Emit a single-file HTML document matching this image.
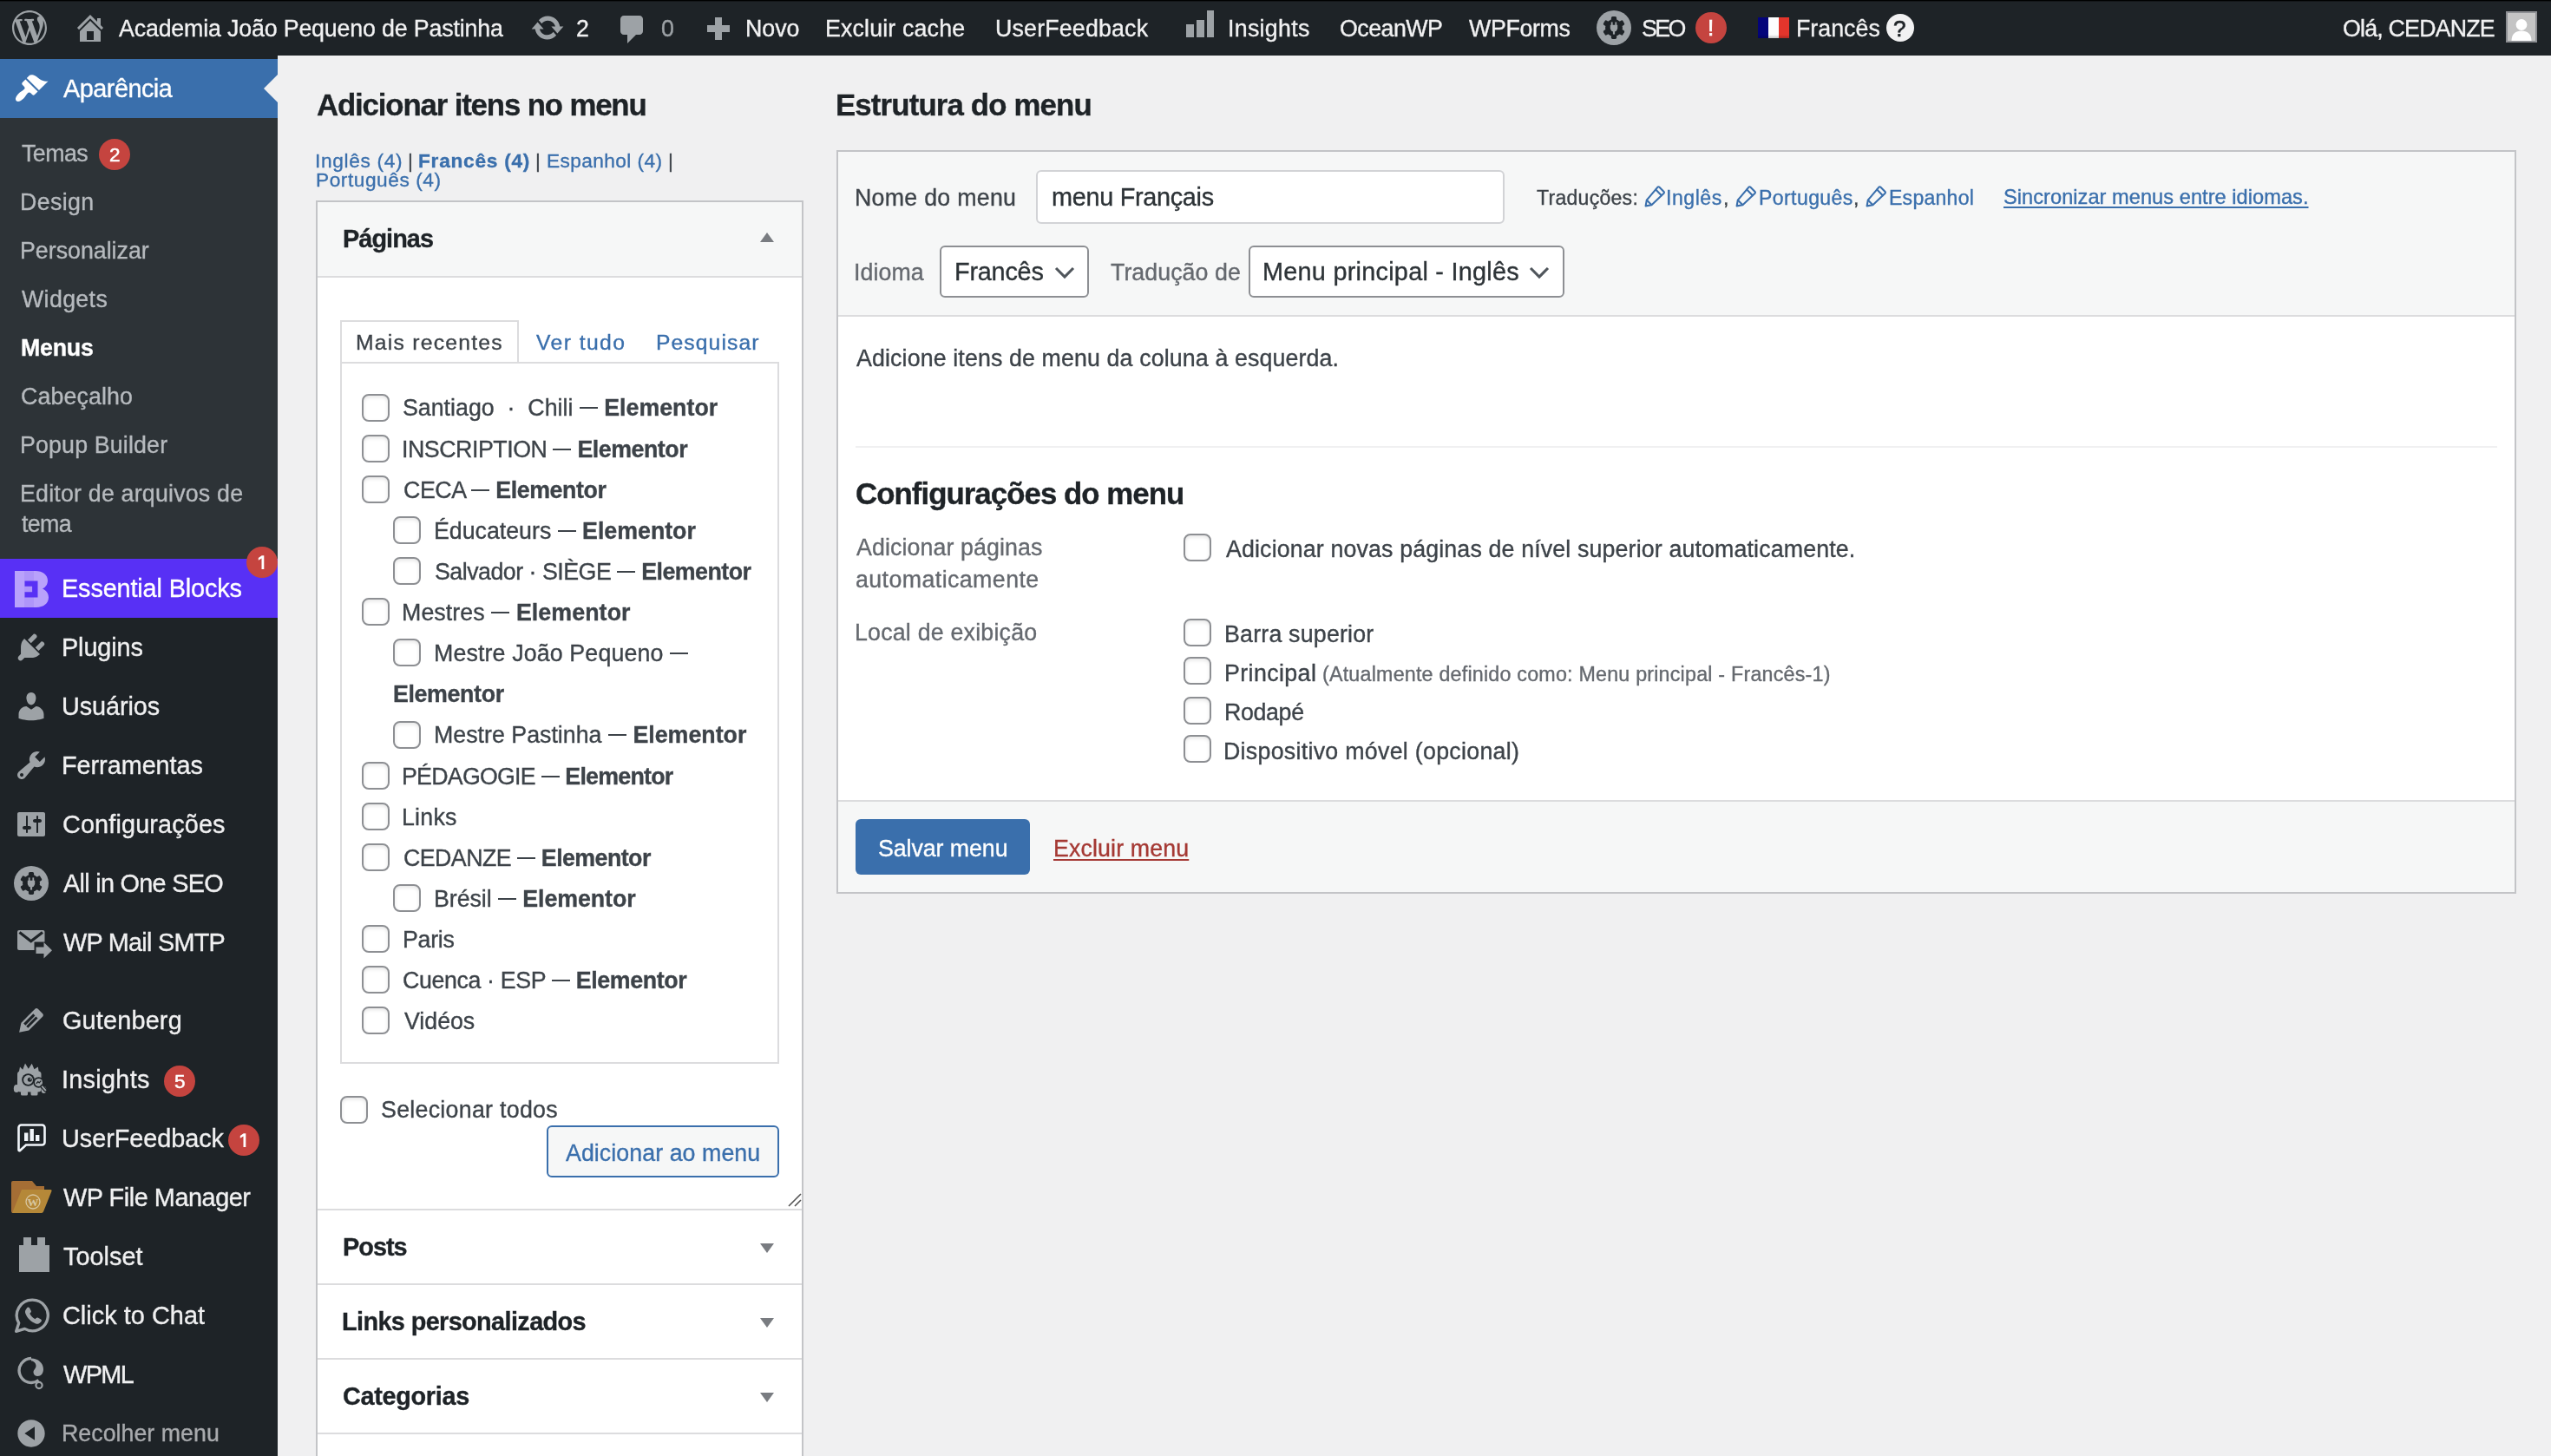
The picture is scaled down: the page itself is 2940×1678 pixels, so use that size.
<!DOCTYPE html>
<html lang="pt-BR"><head><meta charset="utf-8"><title>Menus</title><style>
html,body{margin:0;padding:0}
body{width:2940px;height:1678px;overflow:hidden;position:relative;background:#f0f0f1;font-family:"Liberation Sans",sans-serif;}
.t{position:absolute;white-space:nowrap;line-height:1;font-family:"Liberation Sans",sans-serif;-webkit-text-stroke:.35px currentColor;will-change:transform;}
.t b{font-weight:700}
.d{display:inline-block;width:21px;height:2px;background:currentColor;vertical-align:7.6px}
</style></head><body>
<div style="position:absolute;left:0px;top:0px;width:2940px;height:64px;background:#1e2327"></div>
<div style="position:absolute;left:0px;top:0px;width:2940px;height:1px;background:#000"></div>
<div style="position:absolute;left:0px;top:1px;width:2940px;height:1px;background:rgba(0,0,0,.35)"></div>
<svg style="position:absolute;left:14px;top:12px;" width="40" height="40" viewBox="0 0 20 20"><path fill="#9da2a6" d="M20 10c0-5.51-4.49-10-10-10C4.48 0 0 4.49 0 10c0 5.52 4.48 10 10 10 5.51 0 10-4.48 10-10zM7.78 15.37L4.37 6.22c.55-.02 1.17-.08 1.17-.08.5-.06.44-1.13-.06-1.11 0 0-1.45.11-2.37.11-.18 0-.37 0-.58-.01C4.12 2.69 6.87 1.11 10 1.11c2.33 0 4.45.87 6.05 2.34-.68-.11-1.65.39-1.65 1.58 0 .74.45 1.36.9 2.1.35.61.55 1.36.55 2.46 0 1.49-1.4 5-1.4 5l-3.03-8.37c.54-.02.82-.17.82-.17.5-.05.44-1.25-.06-1.22 0 0-1.44.12-2.38.12-.87 0-2.33-.12-2.33-.12-.5-.03-.56 1.2-.06 1.22l.92.08 1.26 3.41zM17.41 10c.24-.64.74-1.87.43-4.25.7 1.29 1.05 2.71 1.05 4.25 0 3.29-1.73 6.24-4.4 7.78.97-2.59 1.94-5.2 2.92-7.78zM6.1 18.09C3.12 16.65 1.11 13.53 1.11 10c0-1.3.23-2.48.72-3.59C3.25 10.3 4.67 14.2 6.1 18.09zm4.03-6.63l2.58 6.98c-.86.29-1.76.45-2.71.45-.79 0-1.57-.11-2.29-.33.81-2.38 1.62-4.74 2.42-7.1z"/></svg>
<svg style="position:absolute;left:84px;top:12px;" width="40" height="40" viewBox="0 0 20 20"><path fill="#9da2a6" d="M16 8.5l1.53 1.53-1.06 1.06L10 4.62l-6.47 6.47-1.06-1.06L10 2.5l4 4v-2h2v4zm-6-2.46l6 5.99V18H4v-5.97zM12 17v-5H8v5h4z"/></svg>
<span class="t" style="left:137.4px;top:19.6px;font-size:26.78px;color:#f1f1f2;font-weight:400;letter-spacing:-0.160px;">Academia João Pequeno de Pastinha</span>
<svg style="position:absolute;left:611.4px;top:12px;" width="40" height="40" viewBox="0 0 20 20"><path fill="#9da2a6" d="M10.2 3.28c3.53 0 6.43 2.61 6.92 6h2.08l-3.5 4-3.5-4h2.32c-.45-1.97-2.21-3.45-4.32-3.45-1.45 0-2.73.71-3.54 1.78L4.95 5.66C6.23 4.2 8.11 3.28 10.2 3.28zm-.4 13.44c-3.52 0-6.43-2.61-6.92-6H.8l3.5-4c1.17 1.33 2.33 2.67 3.5 4H5.48c.45 1.97 2.21 3.45 4.32 3.45 1.45 0 2.73-.71 3.54-1.78l1.71 1.95c-1.28 1.46-3.15 2.38-5.25 2.38z"/></svg>
<span class="t" style="left:664.0px;top:19.6px;font-size:26.78px;color:#f1f1f2;font-weight:400;letter-spacing:0.000px;">2</span>
<svg style="position:absolute;left:709px;top:14px;" width="40" height="40" viewBox="0 0 20 20"><path fill="#9da2a6" d="M5 2h9c1.1 0 2 .9 2 2v7c0 1.1-.9 2-2 2h-2l-5 5v-5H5c-1.1 0-2-.9-2-2V4c0-1.1.9-2 2-2z"/></svg>
<span class="t" style="left:762.0px;top:19.6px;font-size:26.78px;color:#9da2a6;font-weight:400;letter-spacing:0.000px;">0</span>
<div style="position:absolute;left:815px;top:29.2px;width:26px;height:8px;background:#9da2a6"></div>
<div style="position:absolute;left:824px;top:20.2px;width:8px;height:26px;background:#9da2a6"></div>
<span class="t" style="left:858.6px;top:19.6px;font-size:26.78px;color:#f1f1f2;font-weight:400;letter-spacing:0.000px;">Novo</span>
<span class="t" style="left:951.0px;top:19.6px;font-size:26.78px;color:#f1f1f2;font-weight:400;letter-spacing:0.158px;">Excluir cache</span>
<span class="t" style="left:1147.0px;top:19.6px;font-size:26.78px;color:#f1f1f2;font-weight:400;letter-spacing:0.182px;">UserFeedback</span>
<div style="position:absolute;left:1366.7px;top:28.3px;width:9px;height:15px;background:#9da2a6"></div>
<div style="position:absolute;left:1379px;top:22.7px;width:8.5px;height:20.6px;background:#9da2a6"></div>
<div style="position:absolute;left:1390.7px;top:12.3px;width:8.6px;height:31px;background:#9da2a6"></div>
<span class="t" style="left:1414.6px;top:19.6px;font-size:26.78px;color:#f1f1f2;font-weight:400;letter-spacing:0.302px;">Insights</span>
<span class="t" style="left:1544.0px;top:19.6px;font-size:26.78px;color:#f1f1f2;font-weight:400;letter-spacing:-0.515px;">OceanWP</span>
<span class="t" style="left:1693.0px;top:19.6px;font-size:26.78px;color:#f1f1f2;font-weight:400;letter-spacing:-0.334px;">WPForms</span>
<svg style="position:absolute;left:1840px;top:11.7px;" width="40" height="40" viewBox="-20 -20 40 40"><circle r="20" fill="#9da2a6"/><g fill="#1e2327"><circle r="10"/><rect x="-3.1" y="-12.9" width="6.2" height="25.8" rx="1.6" transform="rotate(0)"/><rect x="-3.1" y="-12.9" width="6.2" height="25.8" rx="1.6" transform="rotate(60)"/><rect x="-3.1" y="-12.9" width="6.2" height="25.8" rx="1.6" transform="rotate(120)"/></g><g fill="#9da2a6"><path d="M-4.200 -3.200h8.400v3.400a4.200 4.200 0 0 1-8.400 0z"/><rect x="-3.200" y="-6.600" width="1.800" height="4.400"/><rect x="1.400" y="-6.600" width="1.800" height="4.400"/><rect x="-1.100" y="3" width="2.200" height="4.600"/></g></svg>
<span class="t" style="left:1892.0px;top:19.6px;font-size:26.78px;color:#f1f1f2;font-weight:400;letter-spacing:-2.550px;">SEO</span>
<div style="position:absolute;left:1954px;top:14px;width:36px;height:36px;background:#c5443f;border-radius:50%"></div>
<span class="t" style="left:1967.7px;top:19.3px;font-size:26.00px;color:#fff;font-weight:400;letter-spacing:0.000px;-webkit-text-stroke:.7px #fff">!</span>
<div style="position:absolute;left:2026px;top:20px;width:12px;height:24px;background:#04047a"></div>
<div style="position:absolute;left:2038px;top:20px;width:12px;height:24px;background:#fdfdfd"></div>
<div style="position:absolute;left:2050px;top:20px;width:12px;height:24px;background:#e3352c"></div>
<div style="position:absolute;left:2026px;top:40px;width:36px;height:4px;background:linear-gradient(rgba(0,0,0,0),rgba(0,0,0,.22))"></div>
<span class="t" style="left:2069.6px;top:19.6px;font-size:26.78px;color:#f1f1f2;font-weight:400;letter-spacing:0.015px;">Francês</span>
<div style="position:absolute;left:2174px;top:16px;width:32px;height:32px;background:#f1f1f2;border-radius:50%"></div>
<span class="t" style="left:2182.3px;top:19.8px;font-size:26.00px;color:#1e2327;font-weight:400;letter-spacing:0.000px;-webkit-text-stroke:.7px #1e2327">?</span>
<span class="t" style="left:2700.0px;top:19.6px;font-size:26.78px;color:#f1f1f2;font-weight:400;letter-spacing:-0.794px;">Olá, CEDANZE</span>
<svg style="position:absolute;left:2888px;top:13px;" width="36" height="36" viewBox="0 0 36 36"><rect width="36" height="36" fill="#8d8f93"/><rect x="2" y="2" width="32" height="32" fill="#c4c4c4"/><circle cx="18" cy="15.5" r="6.4" fill="#fff"/><path d="M6.5 34c0-8 5-11.5 11.5-11.5S29.5 26 29.5 34z" fill="#fff"/></svg>
<div style="position:absolute;left:0px;top:64px;width:320px;height:1614px;background:#1e2327"></div>
<div style="position:absolute;left:0px;top:68px;width:320px;height:68px;background:#3a6fac"></div>
<div style="position:absolute;left:304px;top:86px;width:0;height:0;border:16px solid transparent;border-right-color:#f0f0f1;border-left-width:0"></div>
<svg style="position:absolute;left:16px;top:82px;" width="40" height="40" viewBox="0 0 20 20"><path fill="#fff" d="M14.48 11.06L7.41 3.99l1.5-1.5c.5-.56 2.3-.47 3.51.32 1.21.8 1.43 1.28 2.91 2.1 1.18.64 2.45 1.26 4.45.85zm-.71.71L6.7 4.7 4.93 6.47c-.39.39-.39 1.02 0 1.41l1.06 1.06c.39.39.39 1.03 0 1.42-.6.6-1.43 1.11-2.21 1.69-.35.26-.7.53-1.01.84C1.43 14.23.4 16.08 1.4 17.07c.99 1 2.84-.03 4.18-1.36.31-.31.58-.66.85-1.02.57-.78 1.08-1.61 1.69-2.21.39-.39 1.02-.39 1.41 0l1.06 1.06c.39.39 1.02.39 1.41 0z"/></svg>
<span class="t" style="left:73.4px;top:88.2px;font-size:28.84px;color:#fff;font-weight:400;letter-spacing:-0.504px;">Aparência</span>
<div style="position:absolute;left:0px;top:136px;width:320px;height:508px;background:#2d3337"></div>
<span class="t" style="left:25.0px;top:164.2px;font-size:26.78px;color:#b6babe;font-weight:400;letter-spacing:-0.525px;">Temas</span>
<span class="t" style="left:23.0px;top:220.2px;font-size:26.78px;color:#b6babe;font-weight:400;letter-spacing:0.380px;">Design</span>
<span class="t" style="left:23.0px;top:276.1px;font-size:26.78px;color:#b6babe;font-weight:400;letter-spacing:-0.004px;">Personalizar</span>
<span class="t" style="left:25.0px;top:332.1px;font-size:26.78px;color:#b6babe;font-weight:400;letter-spacing:0.348px;">Widgets</span>
<span class="t" style="left:24.0px;top:388.0px;font-size:26.78px;color:#fff;font-weight:700;letter-spacing:-0.225px;">Menus</span>
<span class="t" style="left:24.0px;top:444.0px;font-size:26.78px;color:#b6babe;font-weight:400;letter-spacing:0.104px;">Cabeçalho</span>
<span class="t" style="left:23.0px;top:499.9px;font-size:26.78px;color:#b6babe;font-weight:400;letter-spacing:0.158px;">Popup Builder</span>
<span class="t" style="left:23.0px;top:555.9px;font-size:26.78px;color:#b6babe;font-weight:400;letter-spacing:0.205px;">Editor de arquivos de</span>
<span class="t" style="left:25.0px;top:591.2px;font-size:26.78px;color:#b6babe;font-weight:400;letter-spacing:-0.633px;">tema</span>
<div style="position:absolute;left:114px;top:160px;width:36px;height:36px;background:#c5443f;border-radius:50%"></div>
<span class="t" style="left:125.9px;top:167.6px;font-size:22.50px;color:#fff;font-weight:400;letter-spacing:0.000px;-webkit-text-stroke:.5px #fff">2</span>
<div style="position:absolute;left:0px;top:644px;width:320px;height:68px;background:#5830f5"></div>
<svg style="position:absolute;left:16.5px;top:658px;" width="39" height="42" viewBox="0 0 39 42"><path d="M0 0h24c8 0 14 4.5 14 11 0 4.5-2.3 7.6-6 9.6 4.3 1.8 7 5.2 7 10 0 7-6 11.4-14 11.4H0z" fill="#b9a2fb"/><path d="M11 0h11v42H11z" fill="#a78cf8" opacity=".55"/><path d="M11 9h14v7h-9v5h9v7H11v7h17v-7h-3" fill="none"/><path d="M12 10h14v7H18v4h8v7H12v-7h0z" fill="#5830f5" opacity="0"/><path d="M11.5 11.5h15v6.3h-8.7v-0h8.7v6.4h-8.7v0h8.7v6.3h-15v-6.3h8.6v-6.4h-8.6z" fill="#5830f5"/></svg>
<span class="t" style="left:71.4px;top:663.8px;font-size:28.84px;color:#fff;font-weight:400;letter-spacing:-0.133px;">Essential Blocks</span>
<div style="position:absolute;left:284px;top:630px;width:36px;height:36px;background:#c5443f;border-radius:50%"></div>
<svg style="position:absolute;left:284px;top:630px;" width="36" height="36" viewBox="-18 -18 36 36"><path d="M-0.300 -7.700H2.300V8H-0.500V-4.600L-4.200 -2.300V-5.100z" fill="#fff"/></svg>
<span class="t" style="left:71.0px;top:732.0px;font-size:28.84px;color:#f0f0f1;font-weight:400;letter-spacing:-0.116px;">Plugins</span>
<svg style="position:absolute;left:16px;top:726px;" width="40" height="40" viewBox="0 0 20 20"><path fill="#9da2a6" d="M13.11 4.36L9.87 7.6 8 5.73l3.24-3.24c.35-.34 1.05-.2 1.56.32.52.51.66 1.21.31 1.55zm-8 1.77l.91-1.12 9.01 9.01-1.19.84c-.71.71-2.63 1.16-3.82 1.16H6.14L4.9 17.26c-.59.59-1.54.59-2.12 0-.59-.58-.59-1.53 0-2.12l1.24-1.24v-3.88c0-1.13.4-3.19 1.09-3.89zm7.26 3.97l3.24-3.24c.34-.35 1.04-.21 1.55.31.52.51.66 1.21.31 1.55l-3.24 3.25z"/></svg>
<span class="t" style="left:71.4px;top:800.0px;font-size:28.84px;color:#f0f0f1;font-weight:400;letter-spacing:-0.090px;">Usuários</span>
<svg style="position:absolute;left:16px;top:794px;" width="40" height="40" viewBox="0 0 20 20"><path fill="#9da2a6" d="M10 9.25c-2.27 0-2.73-3.44-2.73-3.44C7 4.02 7.82 2 9.97 2c2.16 0 2.98 2.02 2.71 3.81 0 0-.41 3.44-2.68 3.44zm0 2.57L12.72 10c2.39 0 4.52 2.33 4.52 4.53v2.49s-3.65 1.13-7.24 1.13c-3.65 0-7.24-1.13-7.24-1.13v-2.49c0-2.25 1.94-4.48 4.47-4.48z"/></svg>
<span class="t" style="left:71.4px;top:868.0px;font-size:28.84px;color:#f0f0f1;font-weight:400;letter-spacing:-0.043px;">Ferramentas</span>
<svg style="position:absolute;left:16px;top:862px;" width="40" height="40" viewBox="0 0 20 20"><path fill="#9da2a6" d="M16.68 9.77c-1.34 1.34-3.3 1.67-4.95.99l-5.41 6.52c-.99.99-2.59.99-3.58 0s-.99-2.59 0-3.57l6.52-5.42c-.68-1.65-.35-3.61.99-4.95 1.28-1.28 3.12-1.62 4.72-1.06l-2.89 2.89 2.82 2.82 2.86-2.87c.53 1.58.18 3.39-1.08 4.65zM3.81 16.21c.4.39 1.04.39 1.43 0 .4-.4.4-1.04 0-1.43-.39-.4-1.03-.4-1.43 0-.39.39-.39 1.03 0 1.43z"/></svg>
<span class="t" style="left:72.4px;top:936.0px;font-size:28.84px;color:#f0f0f1;font-weight:400;letter-spacing:0.133px;">Configurações</span>
<svg style="position:absolute;left:16px;top:930px;" width="40" height="40" viewBox="0 0 20 20"><path fill="#9da2a6" d="M18 16V4c0-.55-.45-1-1-1H3c-.55 0-1 .45-1 1v12c0 .55.45 1 1 1h14c.55 0 1-.45 1-1zM8 11h1c.55 0 1 .45 1 1s-.45 1-1 1H8v1.5c0 .28-.22.5-.5.5s-.5-.22-.5-.5V13H6c-.55 0-1-.45-1-1s.45-1 1-1h1V5.5c0-.28.22-.5.5-.5s.5.22.5.5V11zm5-2h-1c-.55 0-1-.45-1-1s.45-1 1-1h1V5.5c0-.28.22-.5.5-.5s.5.22.5.5V7h1c.55 0 1 .45 1 1s-.45 1-1 1h-1v5.5c0 .28-.22.5-.5.5s-.5-.22-.5-.5V9z"/></svg>
<span class="t" style="left:73.4px;top:1004.0px;font-size:28.84px;color:#f0f0f1;font-weight:400;letter-spacing:-0.715px;">All in One SEO</span>
<span class="t" style="left:73.4px;top:1072.0px;font-size:28.84px;color:#f0f0f1;font-weight:400;letter-spacing:-0.738px;">WP Mail SMTP</span>
<span class="t" style="left:72.4px;top:1162.0px;font-size:28.84px;color:#f0f0f1;font-weight:400;letter-spacing:0.182px;">Gutenberg</span>
<svg style="position:absolute;left:16px;top:1156px;" width="40" height="40" viewBox="0 0 20 20"><path fill="#9da2a6" d="M13.89 3.39l2.71 2.72c.46.46.42 1.24.03 1.64l-8.01 8.02-5.56 1.16 1.16-5.58s7.6-7.63 7.99-8.03c.39-.39 1.22-.39 1.68.07zm-2.73 2.79l-5.59 5.61 1.11 1.11 5.54-5.65zm-2.97 8.23l5.58-5.6-1.07-1.08-5.59 5.6z"/></svg>
<span class="t" style="left:71.4px;top:1230.0px;font-size:28.84px;color:#f0f0f1;font-weight:400;letter-spacing:0.286px;">Insights</span>
<span class="t" style="left:71.4px;top:1298.0px;font-size:28.84px;color:#f0f0f1;font-weight:400;letter-spacing:-0.039px;">UserFeedback</span>
<span class="t" style="left:73.4px;top:1366.0px;font-size:28.84px;color:#f0f0f1;font-weight:400;letter-spacing:-0.444px;">WP File Manager</span>
<span class="t" style="left:73.4px;top:1434.0px;font-size:28.84px;color:#f0f0f1;font-weight:400;letter-spacing:0.025px;">Toolset</span>
<span class="t" style="left:72.4px;top:1502.0px;font-size:28.84px;color:#f0f0f1;font-weight:400;letter-spacing:0.052px;">Click to Chat</span>
<span class="t" style="left:73.4px;top:1570.0px;font-size:28.84px;color:#f0f0f1;font-weight:400;letter-spacing:-1.582px;">WPML</span>
<svg style="position:absolute;left:16px;top:998px;" width="40" height="40" viewBox="-20 -20 40 40"><circle r="20" fill="#9da2a6"/><g fill="#1e2327"><circle r="10"/><rect x="-3.1" y="-12.9" width="6.2" height="25.8" rx="1.6" transform="rotate(0)"/><rect x="-3.1" y="-12.9" width="6.2" height="25.8" rx="1.6" transform="rotate(60)"/><rect x="-3.1" y="-12.9" width="6.2" height="25.8" rx="1.6" transform="rotate(120)"/></g><g fill="#9da2a6"><path d="M-4.200 -3.200h8.400v3.400a4.200 4.200 0 0 1-8.400 0z"/><rect x="-3.200" y="-6.600" width="1.800" height="4.400"/><rect x="1.400" y="-6.600" width="1.800" height="4.400"/><rect x="-1.100" y="3" width="2.200" height="4.600"/></g></svg>
<svg style="position:absolute;left:20px;top:1071.5px;" width="41" height="34" viewBox="0 0 41 34"><path d="M2 0h27.500a2 2 0 0 1 2 2v11.500H19.500v9.500H2a2 2 0 0 1-2-2V2a2 2 0 0 1 2-2z" fill="#9da2a6"/><path d="M2.500 2.500l13.200 10.200L29 2.500" fill="none" stroke="#1e2327" stroke-width="3.200"/><path d="M21.500 19.500h9v-5.500l9.500 9.200-9.500 9.300V27h-9z" fill="#9da2a6"/></svg>
<svg style="position:absolute;left:15px;top:1224px;" width="41" height="40" viewBox="0 0 41 40"><path d="M6.500 13L8 5.500l3.200 3.300L14 1.500l3.800 6.200 3.900-6 2.800 6.500 4.300-2.700 1.200 7.500z" fill="#9da2a6"/><rect x="5" y="10.500" width="27.500" height="24" rx="3.500" fill="#9da2a6"/><ellipse cx="4" cy="30.500" rx="3.200" ry="4.600" fill="#9da2a6"/><ellipse cx="35.500" cy="32" rx="3" ry="4" fill="#9da2a6"/><rect x="9" y="33" width="8" height="5.500" rx="1.500" fill="#9da2a6"/><rect x="20.500" y="33" width="8" height="5.500" rx="1.500" fill="#9da2a6"/><circle cx="17.500" cy="20.500" r="7.300" fill="#1e2327"/><circle cx="17.500" cy="20.500" r="5.400" fill="#9da2a6"/><circle cx="19.300" cy="20.200" r="2.500" fill="#1e2327"/><circle cx="20.200" cy="19.300" r="0.900" fill="#9da2a6"/><circle cx="29.500" cy="23.500" r="6.200" fill="#1e2327"/><circle cx="29.500" cy="23.500" r="4.500" fill="#9da2a6"/><path d="M26.800 24.800l2-2.200 1.400 1.300 2-2.300" stroke="#1e2327" stroke-width="1.300" fill="none"/><path d="M33.500 28l4 4.500" stroke="#1e2327" stroke-width="4.200" stroke-linecap="round"/><path d="M33.800 28.300l3.600 4" stroke="#9da2a6" stroke-width="2" stroke-linecap="round"/></svg>
<div style="position:absolute;left:189px;top:1228px;width:36px;height:36px;background:#c5443f;border-radius:50%"></div>
<span class="t" style="left:201.3px;top:1235.6px;font-size:22.50px;color:#fff;font-weight:400;letter-spacing:-1.466px;-webkit-text-stroke:.5px #fff">5</span>
<svg style="position:absolute;left:20px;top:1295px;" width="33" height="33" viewBox="0 0 33 33"><path d="M4.5 1.5h24a3 3 0 0 1 3 3v17a3 3 0 0 1-3 3H10l-7 6.5a.9.9 0 0 1-1.5-.7V4.500a3 3 0 0 1 3-3z" fill="none" stroke="#f1f5fa" stroke-width="2.6"/><rect x="8" y="10.5" width="4.4" height="9.5" fill="#f1f5fa"/><rect x="14.5" y="6" width="4.4" height="14" fill="#f1f5fa"/><rect x="21" y="13" width="4.4" height="7" fill="#f1f5fa"/></svg>
<div style="position:absolute;left:263.3px;top:1296.3px;width:36px;height:36px;background:#c5443f;border-radius:50%"></div>
<svg style="position:absolute;left:263.3px;top:1296.3px;" width="36" height="36" viewBox="-18 -18 36 36"><path d="M-0.300 -7.700H2.300V8H-0.500V-4.600L-4.200 -2.300V-5.100z" fill="#fff"/></svg>
<svg style="position:absolute;left:12px;top:1360px;" width="48" height="38" viewBox="0 0 48 38"><path d="M3 1h22l5 6h9v9H1V3a2 2 0 0 1 2-2z" fill="#a56e35"/><path d="M1 10h36v26a2 2 0 0 1-2 2H3a2 2 0 0 1-2-2z" fill="#a56e35"/><path d="M13 11h33a1.500 1.500 0 0 1 1.400 2L38 36.500a2.500 2.500 0 0 1-2.300 1.500H2z" fill="#b58838"/><circle cx="26" cy="25" r="8" fill="none" stroke="#d8c7a0" stroke-width="1.3"/><text x="26" y="30" font-family="Liberation Serif,serif" font-size="13" font-weight="700" text-anchor="middle" fill="#d8c7a0">W</text></svg>
<svg style="position:absolute;left:21.7px;top:1425.7px;" width="35" height="40" viewBox="0 0 35 40"><path d="M0 9h5V0h9v9h7V0h9v9h5v31H0z" fill="#9da2a6"/></svg>
<svg style="position:absolute;left:14.5px;top:1494.5px;" width="44" height="44" viewBox="0 0 42 42"><path d="M21.500 3a17 17 0 1 1-8.600 31.700L3.500 37.500l2.900-9A17 17 0 0 1 21.500 3z" fill="none" stroke="#9da2a6" stroke-width="3.200" stroke-linejoin="round"/><path d="M15.500 11.500c.8-.8 2-.7 2.600.2l1.700 3c.4.800.2 1.700-.4 2.300l-1 1c1.300 2.700 3.300 4.700 6 6l1-1c.600-.600 1.500-.800 2.300-.4l3 1.700c.9.600 1 1.800.2 2.600l-1.300 1.300c-1.200 1.200-3 1.500-4.600.9-5.300-2-9.400-6.100-11.400-11.400-.600-1.600-.300-3.400.9-4.600z" fill="#9da2a6"/></svg>
<svg style="position:absolute;left:19px;top:1563px;" width="34" height="40" viewBox="0 0 34 40"><path d="M17 2.500a14 14 0 1 0 8.500 25.200" fill="none" stroke="#9da2a6" stroke-width="3.400"/><path d="M17 2.500c8 0 14 5.500 14 12.500 0 5-3 8-6.500 8-3 0-5-2-5-4.500 0-3 3-4 3-7.500 0-3-2.500-5.500-5.500-5.500z" fill="#9da2a6"/><circle cx="26" cy="33.500" r="3.600" fill="none" stroke="#9da2a6" stroke-width="2.200"/></svg>
<svg style="position:absolute;left:16px;top:1632px;" width="40" height="40" viewBox="0 0 20 20"><path fill="#9da2a6" d="M10 2.16c4.33 0 7.84 3.51 7.84 7.84s-3.51 7.84-7.84 7.84S2.16 14.33 2.16 10 5.67 2.16 10 2.16zm2 11.72V6.12L6.18 9.97z"/></svg>
<span class="t" style="left:71.0px;top:1638.8px;font-size:26.78px;color:#a8aaad;font-weight:400;letter-spacing:0.024px;">Recolher menu</span>
<span class="t" style="left:365.0px;top:103.8px;font-size:34.81px;color:#1e2327;font-weight:700;letter-spacing:-1.149px;">Adicionar itens no menu</span>
<span class="t" style="left:363.4px;top:173.8px;font-size:22.66px;color:#3a6fac;font-weight:400;letter-spacing:0.668px;">Inglês (4)</span>
<span class="t" style="left:470.1px;top:173.8px;font-size:22.66px;color:#3d4349;font-weight:400;letter-spacing:-1.162px;">|</span>
<span class="t" style="left:482.0px;top:173.8px;font-size:22.66px;color:#3a6fac;font-weight:700;letter-spacing:0.743px;">Francês (4)</span>
<span class="t" style="left:617.3px;top:173.8px;font-size:22.66px;color:#3d4349;font-weight:400;letter-spacing:0.000px;">|</span>
<span class="t" style="left:630.4px;top:173.8px;font-size:22.66px;color:#3a6fac;font-weight:400;letter-spacing:0.417px;">Espanhol (4)</span>
<span class="t" style="left:770.0px;top:173.8px;font-size:22.66px;color:#3d4349;font-weight:400;letter-spacing:0.000px;">|</span>
<span class="t" style="left:364.0px;top:195.5px;font-size:22.66px;color:#3a6fac;font-weight:400;letter-spacing:0.555px;">Português (4)</span>
<div style="position:absolute;left:364px;top:231px;width:562px;height:1500px;background:#fff;border:2px solid #c3c4c7;box-sizing:border-box"></div>
<div style="position:absolute;left:366px;top:233px;width:558px;height:85px;background:#f6f7f7"></div>
<div style="position:absolute;left:366px;top:318px;width:558px;height:2px;background:#dcdcde"></div>
<span class="t" style="left:395.0px;top:260.6px;font-size:28.84px;color:#1e2327;font-weight:700;letter-spacing:-0.935px;">Páginas</span>
<div style="position:absolute;left:876px;top:268px;width:0;height:0;border-left:8px solid transparent;border-right:8px solid transparent;border-bottom:11px solid #797c81"></div>
<div style="position:absolute;left:392px;top:369px;width:206px;height:50px;background:#fff;border:2px solid #dcdcde;border-bottom:0;box-sizing:border-box"></div>
<div style="position:absolute;left:392px;top:417px;width:506px;height:809px;background:#fff;border:2px solid #dcdcde;box-sizing:border-box"></div>
<span class="t" style="left:410.0px;top:382.6px;font-size:24.72px;color:#3d4349;font-weight:400;letter-spacing:1.236px;">Mais recentes</span>
<span class="t" style="left:617.6px;top:382.6px;font-size:24.72px;color:#3a6fac;font-weight:400;letter-spacing:1.418px;">Ver tudo</span>
<span class="t" style="left:755.6px;top:382.6px;font-size:24.72px;color:#3a6fac;font-weight:400;letter-spacing:1.069px;">Pesquisar</span>
<div style="position:absolute;left:417px;top:453.5px;width:32px;height:32px;background:#fff;border:2px solid #8d8f93;border-radius:8px;box-sizing:border-box;box-shadow:inset 0 2px 4px rgba(0,0,0,.1)"></div>
<span class="t" style="left:464.4px;top:457.3px;font-size:26.78px;color:#3d4349;font-weight:400;letter-spacing:-0.000px;">Santiago &nbsp;·&nbsp; Chili <i class="d"></i> <b>Elementor</b></span>
<div style="position:absolute;left:417px;top:500.63px;width:32px;height:32px;background:#fff;border:2px solid #8d8f93;border-radius:8px;box-sizing:border-box;box-shadow:inset 0 2px 4px rgba(0,0,0,.1)"></div>
<span class="t" style="left:463.4px;top:504.5px;font-size:26.78px;color:#3d4349;font-weight:400;letter-spacing:-0.460px;">INSCRIPTION <i class="d"></i> <b>Elementor</b></span>
<div style="position:absolute;left:417px;top:547.76px;width:32px;height:32px;background:#fff;border:2px solid #8d8f93;border-radius:8px;box-sizing:border-box;box-shadow:inset 0 2px 4px rgba(0,0,0,.1)"></div>
<span class="t" style="left:464.8px;top:551.6px;font-size:26.78px;color:#3d4349;font-weight:400;letter-spacing:-0.420px;">CECA <i class="d"></i> <b>Elementor</b></span>
<div style="position:absolute;left:453.3px;top:594.89px;width:32px;height:32px;background:#fff;border:2px solid #8d8f93;border-radius:8px;box-sizing:border-box;box-shadow:inset 0 2px 4px rgba(0,0,0,.1)"></div>
<span class="t" style="left:499.8px;top:598.7px;font-size:26.78px;color:#3d4349;font-weight:400;letter-spacing:-0.015px;">Éducateurs <i class="d"></i> <b>Elementor</b></span>
<div style="position:absolute;left:453.3px;top:642.02px;width:32px;height:32px;background:#fff;border:2px solid #8d8f93;border-radius:8px;box-sizing:border-box;box-shadow:inset 0 2px 4px rgba(0,0,0,.1)"></div>
<span class="t" style="left:500.8px;top:645.9px;font-size:26.78px;color:#3d4349;font-weight:400;letter-spacing:-0.499px;">Salvador · SIÈGE <i class="d"></i> <b>Elementor</b></span>
<div style="position:absolute;left:417px;top:689.15px;width:32px;height:32px;background:#fff;border:2px solid #8d8f93;border-radius:8px;box-sizing:border-box;box-shadow:inset 0 2px 4px rgba(0,0,0,.1)"></div>
<span class="t" style="left:463.2px;top:693.0px;font-size:26.78px;color:#3d4349;font-weight:400;letter-spacing:0.090px;">Mestres <i class="d"></i> <b>Elementor</b></span>
<div style="position:absolute;left:453.3px;top:736.28px;width:32px;height:32px;background:#fff;border:2px solid #8d8f93;border-radius:8px;box-sizing:border-box;box-shadow:inset 0 2px 4px rgba(0,0,0,.1)"></div>
<span class="t" style="left:500.2px;top:740.1px;font-size:26.78px;color:#3d4349;font-weight:400;letter-spacing:0.138px;">Mestre João Pequeno <i class="d"></i></span>
<span class="t" style="left:452.8px;top:787.2px;font-size:26.78px;color:#3d4349;font-weight:400;letter-spacing:-0.351px;"><b>Elementor</b></span>
<div style="position:absolute;left:453.3px;top:830.54px;width:32px;height:32px;background:#fff;border:2px solid #8d8f93;border-radius:8px;box-sizing:border-box;box-shadow:inset 0 2px 4px rgba(0,0,0,.1)"></div>
<span class="t" style="left:500.2px;top:834.4px;font-size:26.78px;color:#3d4349;font-weight:400;letter-spacing:0.006px;">Mestre Pastinha <i class="d"></i> <b>Elementor</b></span>
<div style="position:absolute;left:417px;top:877.67px;width:32px;height:32px;background:#fff;border:2px solid #8d8f93;border-radius:8px;box-sizing:border-box;box-shadow:inset 0 2px 4px rgba(0,0,0,.1)"></div>
<span class="t" style="left:463.4px;top:881.5px;font-size:26.78px;color:#3d4349;font-weight:400;letter-spacing:-0.746px;">PÉDAGOGIE <i class="d"></i> <b>Elementor</b></span>
<div style="position:absolute;left:417px;top:924.8px;width:32px;height:32px;background:#fff;border:2px solid #8d8f93;border-radius:8px;box-sizing:border-box;box-shadow:inset 0 2px 4px rgba(0,0,0,.1)"></div>
<span class="t" style="left:463.2px;top:928.6px;font-size:26.78px;color:#3d4349;font-weight:400;letter-spacing:0.237px;">Links</span>
<div style="position:absolute;left:417px;top:971.93px;width:32px;height:32px;background:#fff;border:2px solid #8d8f93;border-radius:8px;box-sizing:border-box;box-shadow:inset 0 2px 4px rgba(0,0,0,.1)"></div>
<span class="t" style="left:464.8px;top:975.8px;font-size:26.78px;color:#3d4349;font-weight:400;letter-spacing:-0.551px;">CEDANZE <i class="d"></i> <b>Elementor</b></span>
<div style="position:absolute;left:453.3px;top:1019.06px;width:32px;height:32px;background:#fff;border:2px solid #8d8f93;border-radius:8px;box-sizing:border-box;box-shadow:inset 0 2px 4px rgba(0,0,0,.1)"></div>
<span class="t" style="left:499.8px;top:1022.9px;font-size:26.78px;color:#3d4349;font-weight:400;letter-spacing:-0.068px;">Brésil <i class="d"></i> <b>Elementor</b></span>
<div style="position:absolute;left:417px;top:1066.19px;width:32px;height:32px;background:#fff;border:2px solid #8d8f93;border-radius:8px;box-sizing:border-box;box-shadow:inset 0 2px 4px rgba(0,0,0,.1)"></div>
<span class="t" style="left:463.8px;top:1070.0px;font-size:26.78px;color:#3d4349;font-weight:400;letter-spacing:-0.303px;">Paris</span>
<div style="position:absolute;left:417px;top:1113.32px;width:32px;height:32px;background:#fff;border:2px solid #8d8f93;border-radius:8px;box-sizing:border-box;box-shadow:inset 0 2px 4px rgba(0,0,0,.1)"></div>
<span class="t" style="left:464.2px;top:1117.2px;font-size:26.78px;color:#3d4349;font-weight:400;letter-spacing:-0.374px;">Cuenca · ESP <i class="d"></i> <b>Elementor</b></span>
<div style="position:absolute;left:417px;top:1160.45px;width:32px;height:32px;background:#fff;border:2px solid #8d8f93;border-radius:8px;box-sizing:border-box;box-shadow:inset 0 2px 4px rgba(0,0,0,.1)"></div>
<span class="t" style="left:465.8px;top:1164.3px;font-size:26.78px;color:#3d4349;font-weight:400;letter-spacing:-0.020px;">Vidéos</span>
<div style="position:absolute;left:392px;top:1262.5px;width:32px;height:32px;background:#fff;border:2px solid #8d8f93;border-radius:8px;box-sizing:border-box;box-shadow:inset 0 2px 4px rgba(0,0,0,.1)"></div>
<span class="t" style="left:438.8px;top:1265.6px;font-size:26.78px;color:#3d4349;font-weight:400;letter-spacing:0.283px;">Selecionar todos</span>
<div style="position:absolute;left:630px;top:1297px;width:268px;height:60px;background:#f6f7f7;border:2px solid #3a6fac;border-radius:6px;box-sizing:border-box"></div>
<span class="t" style="left:651.8px;top:1315.5px;font-size:26.78px;color:#3a6fac;font-weight:400;letter-spacing:0.063px;">Adicionar ao menu</span>
<svg style="position:absolute;left:906px;top:1374px;" width="18" height="18" viewBox="0 0 18 18"><path d="M3 16L17 2M10 16l7-7" stroke="#555" stroke-width="1.600" fill="none"/></svg>
<div style="position:absolute;left:366px;top:1393px;width:558px;height:2px;background:#dcdcde"></div>
<span class="t" style="left:395.0px;top:1422.9px;font-size:28.84px;color:#1e2327;font-weight:700;letter-spacing:-0.976px;">Posts</span>
<div style="position:absolute;left:876px;top:1433px;width:0;height:0;border-left:8px solid transparent;border-right:8px solid transparent;border-top:11px solid #797c81"></div>
<div style="position:absolute;left:366px;top:1479px;width:558px;height:2px;background:#dcdcde"></div>
<span class="t" style="left:394.4px;top:1508.9px;font-size:28.84px;color:#1e2327;font-weight:700;letter-spacing:-0.608px;">Links personalizados</span>
<div style="position:absolute;left:876px;top:1519px;width:0;height:0;border-left:8px solid transparent;border-right:8px solid transparent;border-top:11px solid #797c81"></div>
<div style="position:absolute;left:366px;top:1565px;width:558px;height:2px;background:#dcdcde"></div>
<span class="t" style="left:394.6px;top:1594.9px;font-size:28.84px;color:#1e2327;font-weight:700;letter-spacing:-0.308px;">Categorias</span>
<div style="position:absolute;left:876px;top:1605px;width:0;height:0;border-left:8px solid transparent;border-right:8px solid transparent;border-top:11px solid #797c81"></div>
<div style="position:absolute;left:366px;top:1651px;width:558px;height:2px;background:#dcdcde"></div>
<span class="t" style="left:962.6px;top:103.8px;font-size:34.81px;color:#1e2327;font-weight:700;letter-spacing:-0.851px;">Estrutura do menu</span>
<div style="position:absolute;left:964px;top:173px;width:1936px;height:857px;background:#fff;border:2px solid #c3c4c7;box-sizing:border-box"></div>
<div style="position:absolute;left:966px;top:175px;width:1932px;height:188px;background:#f6f7f7"></div>
<div style="position:absolute;left:966px;top:363px;width:1932px;height:2px;background:#dcdcde"></div>
<span class="t" style="left:984.6px;top:214.6px;font-size:26.78px;color:#3d4349;font-weight:400;letter-spacing:0.274px;">Nome do menu</span>
<div style="position:absolute;left:1194px;top:196px;width:540px;height:62px;background:#fff;border:2px solid #d2d3d6;border-radius:6px;box-sizing:border-box"></div>
<span class="t" style="left:1212.0px;top:212.9px;font-size:28.84px;color:#2d3337;font-weight:400;letter-spacing:-0.296px;">menu Français</span>
<span class="t" style="left:1770.6px;top:216.5px;font-size:23.07px;color:#3d4349;font-weight:400;letter-spacing:0.253px;">Traduções:</span>
<svg style="position:absolute;left:1894.5px;top:213.5px;" width="25" height="25" viewBox="0 0 25 25"><g fill="none" stroke="#3a6fac" stroke-width="2.100" stroke-linejoin="round" stroke-linecap="round"><path d="M17.200 1.600l5.400 5.400a1.200 1.200 0 0 1 0 1.700L8.400 22.200 1.600 23.400l1.200-6.800L15.500 1.600a1.200 1.200 0 0 1 1.700 0z"/><path d="M13.200 4.600l6.600 6.600"/><path d="M3 16.800l5.200 5.200"/></g></svg>
<span class="t" style="left:1920.4px;top:216.5px;font-size:23.07px;color:#3a6fac;font-weight:400;letter-spacing:0.530px;">Inglês</span>
<span class="t" style="left:1986.3px;top:216.5px;font-size:23.07px;color:#3d4349;font-weight:400;letter-spacing:-0.824px;">,</span>
<svg style="position:absolute;left:1999.6px;top:213.5px;" width="25" height="25" viewBox="0 0 25 25"><g fill="none" stroke="#3a6fac" stroke-width="2.100" stroke-linejoin="round" stroke-linecap="round"><path d="M17.200 1.600l5.400 5.400a1.200 1.200 0 0 1 0 1.700L8.400 22.200 1.600 23.400l1.200-6.800L15.500 1.600a1.200 1.200 0 0 1 1.700 0z"/><path d="M13.200 4.600l6.600 6.600"/><path d="M3 16.800l5.200 5.200"/></g></svg>
<span class="t" style="left:2027.0px;top:216.5px;font-size:23.07px;color:#3a6fac;font-weight:400;letter-spacing:0.402px;">Português</span>
<span class="t" style="left:2136.0px;top:216.5px;font-size:23.07px;color:#3d4349;font-weight:400;letter-spacing:0.000px;">,</span>
<svg style="position:absolute;left:2150px;top:213.5px;" width="25" height="25" viewBox="0 0 25 25"><g fill="none" stroke="#3a6fac" stroke-width="2.100" stroke-linejoin="round" stroke-linecap="round"><path d="M17.200 1.600l5.400 5.400a1.200 1.200 0 0 1 0 1.700L8.400 22.200 1.600 23.400l1.200-6.800L15.500 1.600a1.200 1.200 0 0 1 1.700 0z"/><path d="M13.200 4.600l6.600 6.600"/><path d="M3 16.800l5.200 5.200"/></g></svg>
<span class="t" style="left:2177.4px;top:216.5px;font-size:23.07px;color:#3a6fac;font-weight:400;letter-spacing:0.241px;">Espanhol</span>
<span class="t" style="left:2309.0px;top:216.2px;font-size:23.60px;color:#3a6fac;font-weight:400;letter-spacing:0.043px;text-decoration:underline;text-underline-offset:3px;text-decoration-thickness:1.5px">Sincronizar menus entre idiomas.</span>
<span class="t" style="left:984.2px;top:301.1px;font-size:26.78px;color:#65696f;font-weight:400;letter-spacing:0.084px;">Idioma</span>
<div style="position:absolute;left:1083px;top:283px;width:172px;height:60px;background:#fff;border:2px solid #8d8f93;border-radius:6px;box-sizing:border-box"></div>
<span class="t" style="left:1100.0px;top:298.9px;font-size:28.84px;color:#2d3337;font-weight:400;letter-spacing:-0.223px;">Francês</span>
<svg style="position:absolute;left:1213.7px;top:304.5px;" width="26" height="18" viewBox="0 0 26 18"><path d="M3 4l10 10L23 4" fill="none" stroke="#50565c" stroke-width="3.100"/></svg>
<span class="t" style="left:1279.6px;top:301.1px;font-size:26.78px;color:#65696f;font-weight:400;letter-spacing:0.050px;">Tradução de</span>
<div style="position:absolute;left:1439px;top:283px;width:364px;height:60px;background:#fff;border:2px solid #8d8f93;border-radius:6px;box-sizing:border-box"></div>
<span class="t" style="left:1455.4px;top:298.9px;font-size:28.84px;color:#2d3337;font-weight:400;letter-spacing:0.258px;">Menu principal - Inglês</span>
<svg style="position:absolute;left:1761px;top:304.5px;" width="26" height="18" viewBox="0 0 26 18"><path d="M3 4l10 10L23 4" fill="none" stroke="#50565c" stroke-width="3.100"/></svg>
<span class="t" style="left:987.0px;top:399.5px;font-size:26.78px;color:#3d4349;font-weight:400;letter-spacing:0.127px;">Adicione itens de menu da coluna à esquerda.</span>
<div style="position:absolute;left:986px;top:514px;width:1892px;height:2px;background:#f0f0f1"></div>
<span class="t" style="left:985.6px;top:551.5px;font-size:34.81px;color:#1e2327;font-weight:700;letter-spacing:-0.948px;">Configurações do menu</span>
<span class="t" style="left:986.6px;top:618.3px;font-size:26.78px;color:#65696f;font-weight:400;letter-spacing:0.103px;">Adicionar páginas</span>
<span class="t" style="left:985.6px;top:654.6px;font-size:26.78px;color:#65696f;font-weight:400;letter-spacing:0.419px;">automaticamente</span>
<div style="position:absolute;left:1364px;top:614.7px;width:32px;height:32px;background:#fff;border:2px solid #8d8f93;border-radius:8px;box-sizing:border-box;box-shadow:inset 0 2px 4px rgba(0,0,0,.1)"></div>
<span class="t" style="left:1412.6px;top:620.3px;font-size:26.78px;color:#3d4349;font-weight:400;letter-spacing:0.143px;">Adicionar novas páginas de nível superior automaticamente.</span>
<span class="t" style="left:984.6px;top:715.9px;font-size:26.78px;color:#65696f;font-weight:400;letter-spacing:0.206px;">Local de exibição</span>
<div style="position:absolute;left:1364px;top:713.2px;width:32px;height:32px;background:#fff;border:2px solid #8d8f93;border-radius:8px;box-sizing:border-box;box-shadow:inset 0 2px 4px rgba(0,0,0,.1)"></div>
<span class="t" style="left:1410.6px;top:718.3px;font-size:26.78px;color:#3d4349;font-weight:400;letter-spacing:0.206px;">Barra superior</span>
<div style="position:absolute;left:1364px;top:757.2px;width:32px;height:32px;background:#fff;border:2px solid #8d8f93;border-radius:8px;box-sizing:border-box;box-shadow:inset 0 2px 4px rgba(0,0,0,.1)"></div>
<span class="t" style="left:1410.6px;top:762.6px;font-size:26.78px;color:#3d4349;font-weight:400;letter-spacing:0.401px;">Principal</span>
<span class="t" style="left:1523.6px;top:765.6px;font-size:23.28px;color:#65696f;font-weight:400;letter-spacing:0.212px;">(Atualmente definido como: Menu principal - Francês-1)</span>
<div style="position:absolute;left:1364px;top:802.7px;width:32px;height:32px;background:#fff;border:2px solid #8d8f93;border-radius:8px;box-sizing:border-box;box-shadow:inset 0 2px 4px rgba(0,0,0,.1)"></div>
<span class="t" style="left:1410.6px;top:807.8px;font-size:26.78px;color:#3d4349;font-weight:400;letter-spacing:-0.345px;">Rodapé</span>
<div style="position:absolute;left:1364px;top:847.2px;width:32px;height:32px;background:#fff;border:2px solid #8d8f93;border-radius:8px;box-sizing:border-box;box-shadow:inset 0 2px 4px rgba(0,0,0,.1)"></div>
<span class="t" style="left:1410.4px;top:852.6px;font-size:26.78px;color:#3d4349;font-weight:400;letter-spacing:0.285px;">Dispositivo móvel (opcional)</span>
<div style="position:absolute;left:966px;top:922px;width:1932px;height:2px;background:#dcdcde"></div>
<div style="position:absolute;left:966px;top:924px;width:1932px;height:104px;background:#f6f7f7"></div>
<div style="position:absolute;left:986px;top:944px;width:201px;height:64px;background:#3a6fac;border-radius:6px"></div>
<span class="t" style="left:1011.6px;top:964.8px;font-size:26.78px;color:#fff;font-weight:400;letter-spacing:-0.070px;">Salvar menu</span>
<span class="t" style="left:1213.6px;top:964.8px;font-size:26.78px;color:#a53934;font-weight:400;letter-spacing:0.129px;text-decoration:underline;text-underline-offset:3px;text-decoration-thickness:1.5px">Excluir menu</span>
</body></html>
